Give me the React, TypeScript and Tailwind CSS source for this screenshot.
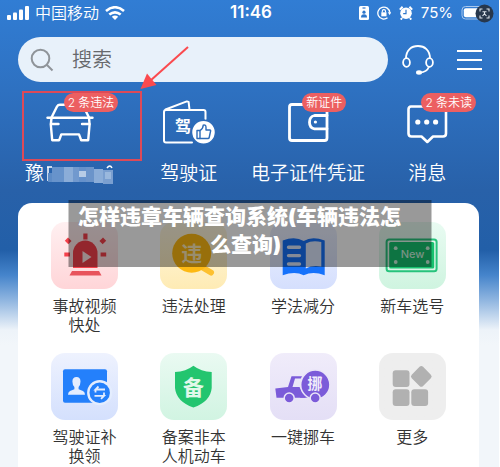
import type { ReactNode } from 'react';

interface Shortcut {
  label: string;
  badge?: string;
  masked?: boolean;
  icon: ReactNode;
}

interface Service {
  label: string;
  tile: string;
  icon: ReactNode;
}

const navSvg = {
  viewBox: '0 0 56 48',
  className: 'h-12 w-14',
  fill: 'none',
  stroke: '#fff',
  strokeWidth: 2.4,
  strokeLinejoin: 'round' as const,
  strokeLinecap: 'round' as const,
  'aria-hidden': true,
};

const tileSvg = {
  viewBox: '0 0 67 67',
  className: 'h-full w-full',
  'aria-hidden': true,
};

const CarIcon = () => (
  <svg {...navSvg}>
    <path d="M9.5 21.5L15 10.5Q16 8.8 18 8.8H38.5Q40.5 8.8 41.5 10.5L47 21.5" />
    <path d="M5.5 21.7H50.5" />
    <path d="M9.5 22L8.8 28.5L10.2 44.2H17.2L19.3 38.4H37L39.2 44.2H46.2L47.6 28.5L47 22" />
    <path d="M9 28H16.5M40 28H47.4" />
  </svg>
);

const LicenseIcon = () => (
  <svg {...navSvg} strokeWidth={2}>
    <path d="M44.5 23V16Q44.5 14 42.5 14H5Q3 14 3 16V44.5Q3 46.5 5 46.5H31" />
    <path d="M4.5 13.5L25.8 5.4L27.6 5.9L28.5 13.5" />
    <text x="22" y="36" textAnchor="middle" fontSize="16" fontWeight="700" fill="#fff" stroke="none">驾</text>
    <circle cx="42.5" cy="36.3" r="12" fill="#fff" stroke="#2d6bb8" strokeWidth="1.5" />
    <path d="M36 34.5H39V42.5H36Z" stroke="#2d6bb8" strokeWidth="1.4" />
    <path d="M39 34.5Q42.2 32.5 42.2 29.2Q45 28.3 45 31.5V34H49Q49.8 34 49.6 35L48.2 41.5Q48 42.5 47 42.5H39" stroke="#2d6bb8" strokeWidth="1.4" />
  </svg>
);

const WalletIcon = () => (
  <svg {...navSvg} strokeWidth={2.8}>
    <rect x="9.5" y="8.5" width="37.5" height="36" rx="2.5" />
    <path d="M47 19.5H34.5Q29.5 20.5 29.5 26.2T34.5 32.8H47" />
    <circle cx="35.4" cy="26" r="1.6" fill="#fff" stroke="none" />
  </svg>
);

const MessageIcon = () => (
  <svg {...navSvg} strokeWidth={2.6}>
    <path d="M12 10.5H44Q47 10.5 47 13.5V37.5Q47 40.5 44 40.5H34L28.3 46L22.5 40.5H12.5Q9.5 40.5 9.5 37.5V13.5Q9.5 10.5 12 10.5Z" />
    <g fill="#fff" stroke="none">
      <circle cx="18.8" cy="26" r="2.6" />
      <circle cx="27.7" cy="26" r="2.6" />
      <circle cx="36.6" cy="26" r="2.6" />
    </g>
  </svg>
);

// Pixelated cover over the plate number
const PlateMask = () => (
  <svg viewBox="0 0 68 20" className="h-5 w-[68px]" aria-hidden="true">
    <path d="M1 3H6M2 3V17" stroke="#fff" strokeWidth="1.5" />
    <path d="M61 4Q64 0 66 4" stroke="#fff" strokeWidth="1.5" fill="none" />
    <rect x="2" y="9" width="9" height="9" fill="#5c8bc6" />
    <rect x="6" y="3" width="12" height="15" fill="#6793cb" />
    <rect x="18" y="3" width="9" height="15" fill="#8badd8" />
    <rect x="27" y="3" width="6" height="15" fill="#7199ce" />
    <rect x="33" y="3" width="7" height="15" fill="#6591cb" />
    <rect x="33" y="7" width="7" height="6" fill="#b7cce6" />
    <rect x="40" y="3" width="8" height="15" fill="#6b94ca" />
    <rect x="48" y="5" width="9" height="14" fill="#8badd8" />
    <rect x="57" y="6" width="10" height="14" fill="#7a9fd0" />
    <rect x="59" y="8" width="6" height="7" fill="#9ab8dd" />
  </svg>
);

const SirenIcon = () => (
  <svg {...tileSvg}>
    <g fill="#f5404b">
      <path d="M22 46V31A12.2 12.4 0 0 1 46.5 31V46Z" />
      <path d="M21 49H48L50.5 53.5H18.5Z" fill="#e8545c" />
      <rect x="32.3" y="11.5" width="4.2" height="6" />
      <rect x="14.5" y="16.5" width="5" height="4.5" transform="rotate(45 17 19)" />
      <rect x="49.5" y="16.5" width="5" height="4.5" transform="rotate(-45 52 19)" />
      <rect x="13.3" y="30.5" width="5.6" height="4" />
      <rect x="49.6" y="30.5" width="5.6" height="4" />
    </g>
    <path d="M31.5 29L40.5 35L31.5 41Z" fill="#fde4e5" />
  </svg>
);

const ViolationIcon = () => (
  <svg {...tileSvg}>
    <path d="M40 44L51 50.5" stroke="#fdc02f" strokeWidth="6" strokeLinecap="round" />
    <circle cx="31.7" cy="31.3" r="19.5" fill="#fdb913" />
    <text x="31.7" y="39" textAnchor="middle" fontSize="21" fontWeight="700" fill="#fdebb8">违</text>
  </svg>
);

const BookIcon = () => (
  <svg {...tileSvg}>
    <path d="M12.7 18.5Q25 14 33.7 19Q42 14 54.7 18.5V53.2Q43 49 33.7 53.2Q25 49 12.7 53.2Z" fill="#1672fb" />
    <path d="M35.8 21.5Q42 18 51.3 20V44.5Q42 43 35.8 46.5Z" fill="#dce6fc" />
    <path d="M18.5 25.3H29.5M18.5 33.6H29.5M18.5 42H29.5" stroke="#dce6fc" strokeWidth="3.4" strokeLinecap="round" />
  </svg>
);

const PlateIcon = () => (
  <svg {...tileSvg}>
    <rect x="7.6" y="17.4" width="50" height="31.8" rx="2.5" fill="none" stroke="#27c37c" strokeWidth="2" />
    <rect x="10.2" y="20" width="45" height="26.6" rx="1.5" fill="#17c16e" />
    <g fill="#c8f3dd">
      <circle cx="16.7" cy="26.2" r="1.9" />
      <circle cx="48.7" cy="26.2" r="1.9" />
      <circle cx="16.7" cy="40" r="1.9" />
      <circle cx="48.7" cy="40" r="1.9" />
      <text x="33.5" y="36" textAnchor="middle" fontSize="11" fontWeight="500">New</text>
    </g>
  </svg>
);

const IdSwapIcon = () => (
  <svg {...tileSvg}>
    <rect x="12" y="16.3" width="44" height="33.4" rx="2" fill="#2480fb" />
    <g fill="#e4edfe">
      <path d="M25.5 24Q29.5 24 29.5 28.5Q29.5 32 27.6 34V36.2L32 38Q34 39 34 41.8H17Q17 39 19 38L23.4 36.2V34Q21.4 32 21.4 28.5Q21.4 24 25.5 24Z" />
      <circle cx="48.7" cy="39.7" r="12.6" />
    </g>
    <circle cx="48.7" cy="39.7" r="10.2" fill="#2480fb" />
    <path d="M54 36.5H44.5L47.5 33.5M44.5 36.5V39.5M43.5 42.8H53L50 45.8M53 42.8V39.5" fill="none" stroke="#e4edfe" strokeWidth="1.8" />
  </svg>
);

const ShieldIcon = () => (
  <svg {...tileSvg}>
    <path d="M33.4 12.7Q41 18.5 51.7 19V35Q50.5 48.5 33.4 54.5Q16.3 48.5 15 35V19Q26 18.5 33.4 12.7Z" fill="#23c56f" />
    <text x="33.4" y="41.5" textAnchor="middle" fontSize="21" fontWeight="700" fill="#e0f8ea">备</text>
  </svg>
);

const TowIcon = () => (
  <svg {...tileSvg}>
    <path d="M5.3 35.5L18 34L21.5 23.3H32L31 25.5H25L22.5 34H29.5L35.5 44.8H6.5Z" fill="#7b5bd9" />
    <path d="M30 44.8H51L47 38H32Z" fill="#7b5bd9" />
    <circle cx="45.3" cy="31.7" r="14.6" fill="#7b5bd9" stroke="#eae5f8" strokeWidth="1.5" />
    <g fill="#7b5bd9" stroke="#eae5f8" strokeWidth="1.5">
      <circle cx="19.2" cy="45" r="5" />
      <circle cx="45.2" cy="45" r="5" />
    </g>
    <text x="45" y="36" textAnchor="middle" fontSize="15" fontWeight="700" fill="#f0ecfb">挪</text>
  </svg>
);

const MoreIcon = () => (
  <svg {...tileSvg} fill="#b1b1b1">
    <rect x="13.7" y="17.3" width="16.8" height="16.8" rx="3" />
    <rect x="13.7" y="36.2" width="16.8" height="16.8" rx="3" />
    <rect x="32.3" y="36.2" width="16.8" height="16.8" rx="3" />
    <rect x="34.3" y="15.4" width="16" height="16" rx="2.5" transform="rotate(45 42.3 23.4)" />
  </svg>
);

const shortcuts: Shortcut[] = [
  { label: '豫', badge: '2 条违法', masked: true, icon: <CarIcon /> },
  { label: '驾驶证', icon: <LicenseIcon /> },
  { label: '电子证件凭证', badge: '新证件', icon: <WalletIcon /> },
  { label: '消息', badge: '2 条未读', icon: <MessageIcon /> },
];

const services: Service[] = [
  { label: '事故视频快处', tile: 'from-[#fff0f1] to-[#ffd5d8]', icon: <SirenIcon /> },
  { label: '违法处理', tile: 'from-[#fff8e2] to-[#feebb4]', icon: <ViolationIcon /> },
  { label: '学法减分', tile: 'from-[#edf1ff] to-[#d5dffd]', icon: <BookIcon /> },
  { label: '新车选号', tile: 'from-[#e9fbf2] to-[#cff4e0]', icon: <PlateIcon /> },
  { label: '驾驶证补换领', tile: 'from-[#eef2fe] to-[#d4e0fd]', icon: <IdSwapIcon /> },
  { label: '备案非本人机动车', tile: 'from-[#eafaf2] to-[#d1f4e2]', icon: <ShieldIcon /> },
  { label: '一键挪车', tile: 'from-[#f0ecfa] to-[#e4dff6]', icon: <TowIcon /> },
  { label: '更多', tile: 'from-[#eeeeee] to-[#eeeeee]', icon: <MoreIcon /> },
];

function StatusBar() {
  return (
    <div className="grid h-[22px] grid-cols-[1fr_auto_1fr] items-center pr-1 pl-[7px] text-base text-white">
      <div className="flex items-center gap-1.5">
        <svg viewBox="0 0 22 14" className="h-3.5 w-[22px]" fill="#fff" aria-hidden="true">
          <rect x="0" y="9" width="4" height="5" rx="1" />
          <rect x="6" y="6.5" width="4" height="7.5" rx="1" />
          <rect x="12" y="3.5" width="4" height="10.5" rx="1" />
          <rect x="18" y="0" width="4" height="14" rx="1" />
        </svg>
        <span className="font-[350]">中国移动</span>
        <svg viewBox="0 0 20 14" className="h-3.5 w-5" fill="none" stroke="#fff" strokeWidth="2.6" aria-hidden="true">
          <path d="M1 5Q10 -2.5 19 5" />
          <path d="M4.3 8.6Q10 4 15.7 8.6" />
          <path d="M10 14L6.8 10.8Q10 8.4 13.2 10.8Z" fill="#fff" stroke="none" />
        </svg>
      </div>
      <span className="text-[17px] font-semibold">11:46</span>
      <div className="flex items-center justify-end gap-2">
        <svg viewBox="0 0 10 14" className="h-3.5 w-2.5" aria-hidden="true">
          <rect width="10" height="14" rx="1.5" fill="#fff" />
          <path d="M3.5 2H6.5" stroke="#2f77cb" strokeWidth="1.2" />
          <circle cx="5" cy="6.2" r="1.6" fill="#2f77cb" />
          <path d="M2 11.5Q2 8.3 5 8.3T8 11.5Z" fill="#2f77cb" />
        </svg>
        <svg viewBox="0 0 14 14" className="size-3.5" fill="none" stroke="#fff" aria-hidden="true">
          <path d="M10.5 11.8A6 6 0 1 1 12.8 6.5" strokeWidth="1.3" />
          <path d="M10.8 6.2H14.4L12.6 9Z" fill="#fff" stroke="none" />
          <rect x="4.3" y="6.3" width="5.2" height="4" fill="#fff" stroke="none" />
          <path d="M5.3 6.5V5Q5.3 3.6 6.9 3.6T8.5 5V6.5" strokeWidth="1.1" />
        </svg>
        <svg viewBox="0 0 14 14" className="size-3.5" fill="none" aria-hidden="true">
          <circle cx="7" cy="7.2" r="5.8" fill="#fff" />
          <path d="M0.8 3.6L3.6 0.8M13.2 3.6L10.4 0.8M3 12L1.8 13.6M11 12L12.2 13.6" stroke="#fff" strokeWidth="2" />
          <path d="M7 3.8V7.6H4.2" stroke="#2f77cb" strokeWidth="1.2" />
        </svg>
        <span className="text-[15px]">75%</span>
        <svg viewBox="0 0 34 20" className="h-5 w-[34px]" aria-hidden="true">
          <rect x="1" y="3.5" width="24" height="12.5" rx="3.5" fill="none" stroke="#a9c8ee" strokeWidth="1" />
          <rect x="2.8" y="5.2" width="17" height="9" rx="2" fill="#fff" />
          <circle cx="23.5" cy="10.5" r="9" fill="#27374c" />
          <path d="M19 8.5V6H21.5M25.5 6H28V8.5M28 12.5V15H25.5M21.5 15H19V12.5M21.5 8.7H25.5M23.5 8.7V10.5M21.5 13L23.5 10.8L25.5 13" fill="none" stroke="#dfe5ec" strokeWidth="1.1" />
        </svg>
      </div>
    </div>
  );
}

function SearchRow() {
  return (
    <div className="mt-[15px] flex items-center pr-4 pl-[18px]">
      <label className="flex h-[45px] min-w-0 flex-1 items-center gap-[18px] rounded-full bg-[#e8f1fa] pl-3">
        <svg viewBox="0 0 24 24" className="size-6 shrink-0" fill="none" stroke="#8f9499" strokeWidth="2" aria-hidden="true">
          <circle cx="10.5" cy="10.5" r="8.8" />
          <path d="M17 17L22.5 22.5" />
        </svg>
        <input
          type="search"
          aria-label="搜索"
          placeholder="搜索"
          className="min-w-0 flex-1 bg-transparent text-xl font-[350] text-[#666] outline-none placeholder:text-[#66686b]"
        />
      </label>
      <button type="button" aria-label="客服" className="ml-3.5">
        <svg viewBox="0 0 32 32" className="size-8" fill="none" stroke="#fff" strokeWidth="1.8" aria-hidden="true">
          <path d="M4 14.5C4 6 9.5 2 16 2S28 6 28 14.5" />
          <ellipse cx="4.5" cy="18.5" rx="3.4" ry="4.3" />
          <ellipse cx="27.5" cy="18.5" rx="3.4" ry="4.3" />
          <path d="M27 22.8Q25 28 18 28.6" />
          <ellipse cx="17" cy="28.5" rx="3" ry="2.2" fill="#fff" stroke="none" />
        </svg>
      </button>
      <button type="button" aria-label="菜单" className="ml-[22px]">
        <svg viewBox="0 0 27 22" className="h-[22px] w-[27px]" stroke="#fff" strokeWidth="1.8" aria-hidden="true">
          <path d="M1 2H26M1 11H26M1 20H26" />
        </svg>
      </button>
    </div>
  );
}

export default function App() {
  return (
    <div className="relative flex min-h-screen flex-col border-r border-white bg-[linear-gradient(to_bottom,#317dd4_0px,#2e71c1_90px,#2861a9_190px,#225fa8_250px,#4584cb_275px,#8fb5e0_300px,#edf3f9_330px,#f2f6fa_345px)] font-['Inter','Noto_Sans_CJK_SC',sans-serif]">
      <StatusBar />
      <SearchRow />

      <nav className="mt-3.5 grid grid-cols-4 pr-3 pl-2.5">
        {shortcuts.map((item) => (
          <button key={item.label} type="button" className="relative flex flex-col items-center">
            {item.icon}
            {item.badge && (
              <span className="absolute -top-[3px] left-1/2 -ml-1.5 h-[19px] rounded-full bg-[#ec5f61] px-1 text-xs leading-[19px] font-[350] whitespace-nowrap text-white">
                {item.badge}
              </span>
            )}
            <span className="mt-4 flex items-center gap-0.5 text-[19px] leading-7 font-[350] whitespace-nowrap text-white">
              {item.label}
              {item.masked && <PlateMask />}
            </span>
          </button>
        ))}
      </nav>

      <main className="mt-[15px] mr-5 ml-[18px] flex-1 rounded-t-[14px] bg-white px-3 pt-[19px]">
        <div className="grid grid-cols-4 gap-y-[18px]">
          {services.map((service) => (
            <button key={service.label} type="button" className="flex flex-col items-center">
              <span className={`size-[67px] rounded-[14px] bg-linear-to-b ${service.tile}`}>{service.icon}</span>
              <span className="mt-2 w-[67px] text-base leading-[19px] font-[350] text-[#333]">{service.label}</span>
            </button>
          ))}
        </div>
      </main>

      {/* Red marker around the car entry and the arrow pointing at it */}
      <div className="pointer-events-none absolute top-[91px] left-[22px] h-[70px] w-[120px] border-2 border-[#dd4a58]" />
      <svg viewBox="0 0 50 46" className="pointer-events-none absolute top-[45px] left-[140px] h-[46px] w-[50px]" aria-hidden="true">
        <path d="M48 2L10 36" stroke="#fb4a4e" strokeWidth="2" />
        <path d="M0.5 44L7 28.5L16.5 40Z" fill="#fb4a4e" />
      </svg>

      {/* Caption banner */}
      <h1 className="absolute top-[200px] left-1/2 w-[363px] -translate-x-1/2 bg-black/40 pt-[3px] pr-4 pb-2 pl-2 text-center text-[21px] leading-7 font-black text-white">
        <span className="block pr-3 whitespace-nowrap">怎样违章车辆查询系统(车辆违法怎</span>
        <span className="block">么查询)</span>
      </h1>
    </div>
  );
}
